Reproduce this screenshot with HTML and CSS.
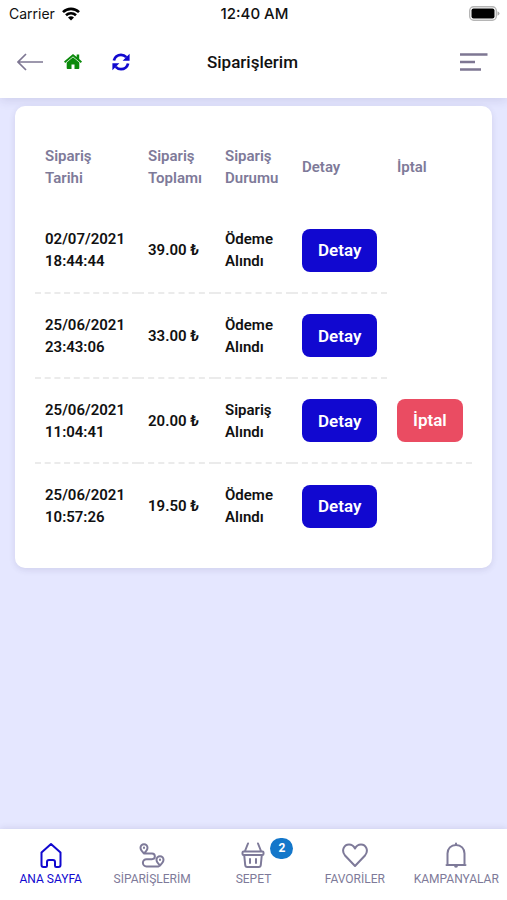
FILE: index.html
```html
<!DOCTYPE html>
<html lang="tr">
<head>
<meta charset="utf-8">
<meta name="viewport" content="width=device-width, initial-scale=1">
<title>Siparişlerim</title>
<link rel="stylesheet" href="styles.css">
</head>
<body>
<div class="top">
  <div class="status">
    <div class="carrier">Carrier
      <svg width="18" height="14" viewBox="0 0 18 14" fill="none" stroke="#000" stroke-width="2.6"><path d="M1 5.200C5.500.7 12.500.7 17 5.200M4 8.200C6.800 5.500 11.200 5.500 14 8.200"/><path d="M9 13.500 6 10.400Q9 7.900 12 10.400Z" fill="#000" stroke="none"/></svg>
    </div>
    <div class="clock">12:40 AM</div>
    <div class="battery">
      <svg width="31" height="15" viewBox="0 0 31 15"><rect x=".7" y=".7" width="26.600" height="13.600" rx="4" fill="#fff" stroke="#b5b5b5" stroke-width="1.400"/><rect x="2.500" y="2.500" width="23" height="10" rx="2" fill="#000"/><path d="M28.500 5.200Q30.500 6 30.500 7.500T28.500 9.800Z" fill="#aaa"/></svg>
    </div>
  </div>
  <header class="bar">
    <div class="tools">
      <button class="icon-btn" aria-label="Geri"><svg width="26" height="18" viewBox="0 0 26 18" fill="none" stroke="#7e7793" stroke-width="1.700"><path d="M26 9H1M9 1 1 9l8 8"/></svg></button>
      <a class="icon-btn home" href="#" aria-label="Ana sayfa"><svg width="18" height="15" viewBox="0 0 18 15" fill="#0b8a0b"><path d="M9 0 0 7.500l1.200 1.400L9 2.400l7.800 6.500L18 7.500l-2.800-2.400V.6h-2.500V3Z"/><path d="M9 3.200 2.700 8.400v5.600q0 .9.800.9h4V10.500h3v4.400h4q.8 0 .8-.9V8.400Z"/></svg></a>
      <button class="icon-btn" aria-label="Yenile"><svg width="18" height="18" viewBox="0 0 18 18"><g fill="none" stroke="#1108cf" stroke-width="2.800"><path d="M1.900 7.500C2.700 4 5.700 1.800 9 1.800c2.300 0 4 .9 5.300 2.300M16.100 10.500c-.8 3.500-3.800 5.700-7.100 5.700-2.300 0-4-.9-5.300-2.300"/></g><path d="M17.600.8v7h-7ZM.4 17.200v-7h7Z" fill="#1108cf"/></svg></button>
    </div>
    <h1>Siparişlerim</h1>
    <button class="icon-btn menu" aria-label="Menü"><svg width="28" height="18" viewBox="0 0 28 18" stroke="#7e7793" stroke-width="2.300"><path d="M0 1.500h27.500M0 9h15M0 16.500h21"/></svg></button>
  </header>
</div>
<main>
  <section class="card">
    <table>
      <colgroup><col class="date"><col class="total"><col class="state"><col class="detail"><col class="cancel"></colgroup>
      <thead><tr><th>Sipariş<br>Tarihi</th><th>Sipariş Toplamı</th><th>Sipariş Durumu</th><th>Detay</th><th>İptal</th></tr></thead>
      <tbody>
        <tr><td>02/07/2021 18:44:44</td><td>39.00 ₺</td><td>Ödeme Alındı</td><td><button class="btn">Detay</button></td></tr>
        <tr><td>25/06/2021 23:43:06</td><td>33.00 ₺</td><td>Ödeme Alındı</td><td><button class="btn">Detay</button></td></tr>
        <tr><td>25/06/2021 11:04:41</td><td>20.00 ₺</td><td>Sipariş Alındı</td><td><button class="btn">Detay</button></td><td><button class="btn danger">İptal</button></td></tr>
        <tr><td>25/06/2021 10:57:26</td><td>19.50 ₺</td><td>Ödeme Alındı</td><td><button class="btn">Detay</button></td></tr>
      </tbody>
    </table>
  </section>
</main>
<nav>
  <a class="active" href="#"><svg width="26" height="26" viewBox="0 0 26 26"><path d="M3.500 10.500 13 2l9.500 8.500V23q0 2-2 2h-2.300q-1.200 0-1.200-1.200V20q0-2-2-2h-4q-2 0-2 2v3.800Q9 25 7.800 25H5.500q-2 0-2-2Z"/></svg>ANA SAYFA</a>
  <a href="#"><svg width="26" height="26" viewBox="0 0 26 26"><path d="M5 11.500C2.500 9 1.500 7.500 1.500 5.800a3.500 3.500 0 0 1 7 0C8.500 7.500 7.500 9 5 11.500ZM21 23.500c-2.500-2.500-3.500-4-3.500-5.700a3.500 3.500 0 0 1 7 0c0 1.700-1 3.200-3.500 5.700ZM5 11.500h8a2.800 2.800 0 0 1 0 5.700H7.500a3.600 3.600 0 0 0 0 7.200h12l1.500-.9M5 5.600v.5M21 17.600v.5"/></svg>SİPARİŞLERİM</a>
  <a href="#"><svg width="26" height="26" viewBox="0 0 26 26"><path d="M3.500 9.500h19q1 0 1 1V12q0 1-1 1h-19q-1 0-1-1v-1.500q0-1 1-1ZM4.200 13l1 10q.2 2 2 2h11.600q1.800 0 2-2l1-10M4.800 9.500 8 1.500M21.200 9.500 18 1.500M10 17v4M16 17v4"/></svg>SEPET<span class="badge">2</span></a>
  <a href="#"><svg width="26" height="26" viewBox="0 0 26 26"><path d="M13 24 3 13.500C-1 8.500 2 2.500 7 2.500c3 0 5 2 6 4 1-2 3-4 6-4 5 0 8 6 4 11Z"/></svg>FAVORİLER</a>
  <a href="#"><svg width="26" height="26" viewBox="0 0 26 26"><path d="M4.500 22.500V11.500c0-5 3.500-8.500 8.500-8.500s8.500 3.500 8.500 8.500v11M3.500 23h19M13 1.500V3M12 23.500q0 1.300 1 1.300t1-1.300"/></svg>KAMPANYALAR</a>
</nav>
</body>
</html>
```

FILE: styles.css
```css
* { box-sizing: border-box; }
body {
  margin: 0;
  min-height: 100vh;
  display: flex;
  flex-direction: column;
  background: #e5e7ff;
  font-family: Roboto, "Liberation Sans", sans-serif;
  color: #111;
}
button { font: inherit; border: 0; cursor: pointer; }
.top {
  background: #fff;
  box-shadow: 0 2px 10px rgba(60, 50, 110, .14);
}
.status {
  display: grid;
  grid-template-columns: 1fr auto 1fr;
  align-items: center;
  height: 27px;
  padding: 0 7px 0 9px;
  font-family: Inter, sans-serif;
  font-size: 14px;
}
.carrier { display: flex; align-items: center; gap: 7px; }
.clock { font-size: 15px; font-weight: 500; }
.battery { display: flex; justify-content: flex-end; }
.bar {
  display: grid;
  grid-template-columns: 1fr auto 1fr;
  align-items: center;
  height: 71px;
  padding: 0 19px 2px 17px;
}
.tools { display: flex; align-items: center; }
.icon-btn { display: flex; padding: 0; background: none; }
.home { margin: 0 30px 0 21px; }
.menu { justify-self: end; }
h1 { margin: 0; font-size: 17px; font-weight: 500; }
main { flex: 1; padding: 8px 15px; }
.card {
  padding: 20px;
  background: #fff;
  border-radius: 10px;
  box-shadow: 0 2px 6px rgba(60, 50, 110, .12);
}
table { width: 100%; border-collapse: collapse; table-layout: fixed; }
.date { width: 103px; }
.total { width: 77px; }
.state { width: 77px; }
.detail { width: 95px; }
th, td {
  height: 85px;
  padding: 10px;
  text-align: left;
  vertical-align: middle;
  font-size: 15px;
  line-height: 22px;
  font-weight: 600;
}
th { height: 82px; color: #7e7a99; }
td { padding-right: 8px; border-bottom: 2px dashed #ebebeb; }
tr:last-child td { border-bottom: 0; }
.btn {
  display: block;
  height: 43px;
  padding: 0 16px;
  border-radius: 8px;
  background: #1108d0;
  color: #fff;
  font-size: 17px;
  font-weight: 600;
}
.danger { background: #ea4c62; }
nav {
  display: grid;
  grid-template-columns: repeat(5, 1fr);
  height: 71px;
  background: #fff;
  box-shadow: 0 -1px 6px rgba(60, 50, 110, .12);
}
nav a {
  position: relative;
  display: flex;
  flex-direction: column;
  align-items: center;
  gap: 2px;
  padding-top: 13px;
  color: #7e7a99;
  font-size: 12px;
  line-height: 18px;
  text-decoration: none;
}
nav svg {
  fill: none;
  stroke: currentColor;
  stroke-width: 2;
  stroke-linejoin: round;
  stroke-linecap: round;
}
nav .active { color: #1108cf; }
.badge {
  position: absolute;
  top: 9px;
  left: calc(50% + 17px);
  width: 23px;
  height: 21px;
  border-radius: 12px;
  background: #1477ca;
  color: #fff;
  font-weight: 700;
  line-height: 21px;
  text-align: center;
}
```
